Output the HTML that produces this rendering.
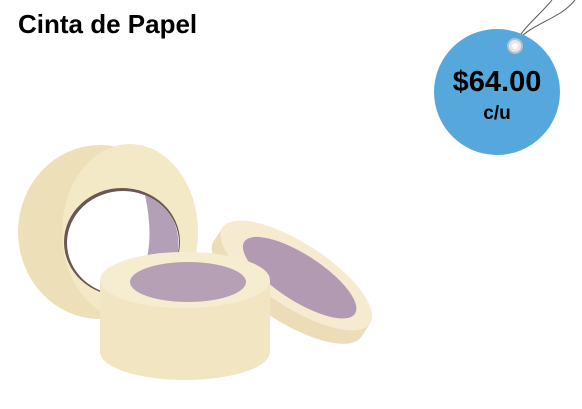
<!DOCTYPE html>
<html><head><meta charset="utf-8"><style>
html,body{margin:0;padding:0;width:582px;height:409px;background:#fff;overflow:hidden;font-family:"Liberation Sans",Arial,sans-serif}
h1{position:absolute;left:18px;top:9px;margin:0;font-size:26px;font-weight:bold;color:#000}
.p{position:absolute;left:433px;width:128px;text-align:center;font-weight:bold;color:#000}
</style></head><body>
<h1>Cinta de Papel</h1>
<svg width="582" height="409" style="position:absolute;left:0;top:0">
<path d="M515 45 C520 30 540 15 552 0" stroke="#555" fill="none" stroke-width="1"/>
<path d="M515 45 C525 25 560 20 575 0" stroke="#555" fill="none" stroke-width="1"/>
<circle cx="497" cy="92" r="63" fill="#56a8dc"/>
<circle cx="515" cy="46" r="7" fill="#e4e8ec" stroke="#b8c0c8" stroke-width="2"/>
<circle cx="515" cy="46" r="3" fill="#fff"/>
<!-- roll 1 -->
<ellipse cx="100" cy="232" rx="82" ry="87" fill="#ede0b8"/>
<ellipse cx="130" cy="232" rx="68" ry="88" fill="#f4e9c6"/>
<ellipse cx="122" cy="242" rx="58" ry="54" fill="#6a5754"/>
<ellipse cx="123" cy="243" rx="56" ry="52" fill="#fff"/>
<path d="M145 195 Q182 212 178 252 Q170 292 125 296 Q160 265 145 195Z" fill="#b49fb8"/>
<!-- roll 3 -->
<g transform="rotate(33 295 283)">
<ellipse cx="292" cy="292" rx="88" ry="32" fill="#ecdcb8"/>
<rect x="204" y="276" width="176" height="16" fill="#ecdcb8"/>
<ellipse cx="292" cy="276" rx="88" ry="32" fill="#f6ead0"/>
<ellipse cx="296" cy="276" rx="66" ry="23" fill="#b39ab3"/>
</g>
<!-- roll 2 -->
<path d="M100 280 L100 352 A85 28 0 0 0 270 352 L270 280Z" fill="#f2e6c2"/>
<ellipse cx="185" cy="280" rx="85" ry="28" fill="#f6ecd0"/>
<ellipse cx="188" cy="282" rx="58" ry="20" fill="#b5a0b6"/>
</svg>
<div class="p" style="top:66px;font-size:29px">$64.00</div>
<div class="p" style="top:103px;font-size:19px">c/u</div>
</body></html>
